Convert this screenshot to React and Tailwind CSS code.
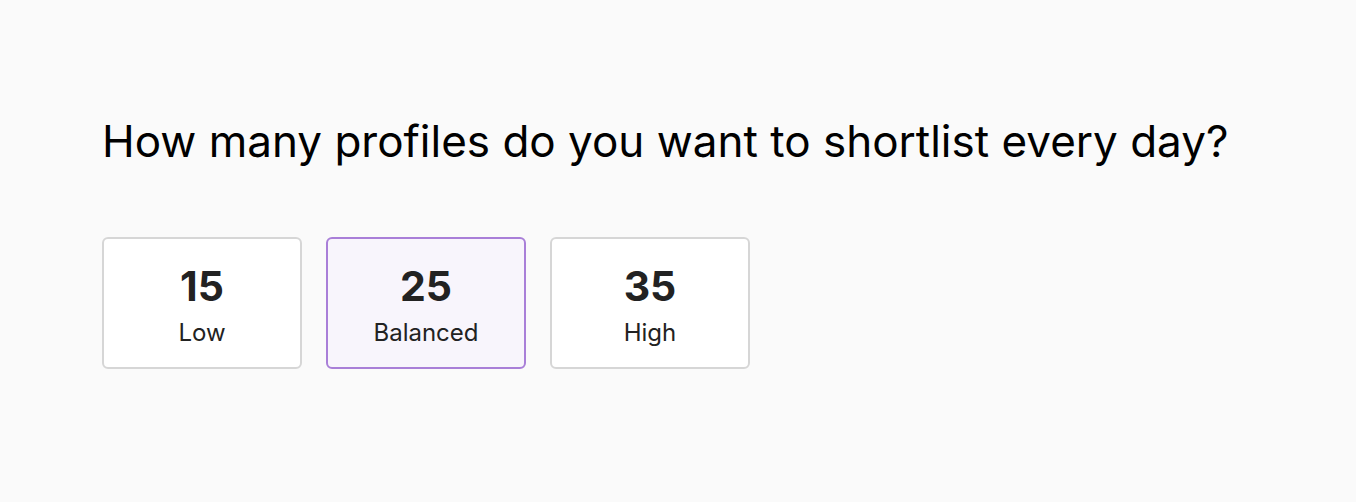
import React, { useState } from 'react';

const options = [
  { value: 15, label: 'Low' },
  { value: 25, label: 'Balanced' },
  { value: 35, label: 'High' },
];

const App = () => {
  const [selected, setSelected] = useState(25);

  return (
    <div className="min-h-[502px] bg-[#fafafa] px-[102px] pt-[113px] font-['Inter',sans-serif]">
      <h1 className="text-[44px] leading-[56px] font-normal text-black">
        How many profiles do you want to shortlist every day?
      </h1>

      <div className="mt-[68px] flex gap-6">
        {options.map((opt) => {
          const active = opt.value === selected;
          return (
            <button
              key={opt.value}
              onClick={() => setSelected(opt.value)}
              className={
                active
                  ? 'flex h-[132px] w-[200px] flex-col items-center justify-center rounded-md border-2 border-[#a97fd8] bg-[#f8f5fc] pt-[3px]'
                  : 'flex h-[132px] w-[200px] flex-col items-center justify-center rounded-md border-2 border-[#d6d6d6] bg-white pt-[3px]'
              }
            >
              <span className="text-[41px] leading-[48px] font-bold text-[#222]">{opt.value}</span>
              <span className="mt-[8px] text-[24px] leading-[30px] text-[#222]">{opt.label}</span>
            </button>
          );
        })}
      </div>
    </div>
  );
};

export default App;
